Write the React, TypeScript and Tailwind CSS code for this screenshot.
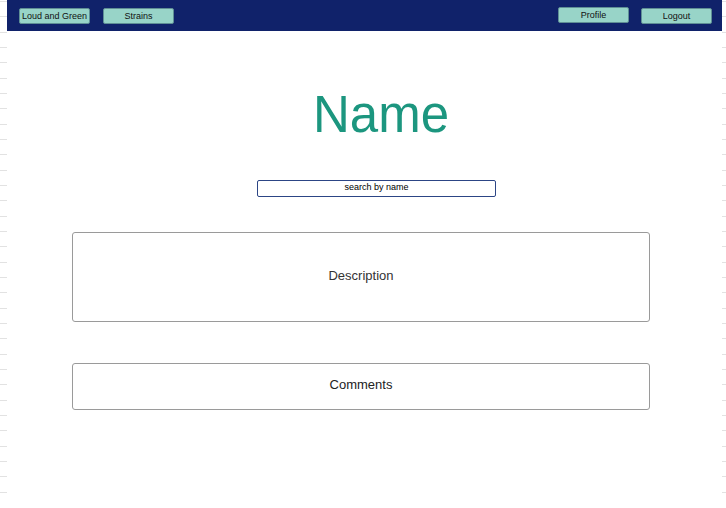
import React from "react";

const ticks = Array.from({ length: 33 }, (_, i) => i);

function Ticks({ w }: { w: string }) {
  return (
    <div className={`flex flex-col pt-[1px] ${w}`}>
      {ticks.map((i) => (
        <div key={i} className="h-[15.33px] shrink-0 border-t border-[#e2e2e2]" />
      ))}
    </div>
  );
}

function NavButton({ label, className = "" }: { label: string; className?: string }) {
  return (
    <button
      className={`h-[16px] w-[71px] rounded-[2px] border border-[#5f8f95] bg-[#98d4c8] text-[9px] leading-none text-[#111] ${className}`}
    >
      {label}
    </button>
  );
}

export default function App() {
  return (
    <div
      className="flex h-[508px] w-[726px] overflow-hidden bg-white"
      style={{ fontFamily: '"Liberation Sans", Arial, sans-serif' }}
    >
      <Ticks w="w-[7px]" />
      <div className="flex w-[715px] flex-col">
        <header className="flex h-[31px] items-start bg-[#10226a] pl-[12px] pr-[10px]">
          <NavButton label="Loud and Green" className="mt-[8px] w-[70px]" />
          <NavButton label="Strains" className="ml-[13px] mt-[8px]" />
          <div className="flex-1" />
          <NavButton label="Profile" className="mt-[7px]" />
          <NavButton label="Logout" className="ml-[12px] mt-[8px]" />
        </header>
        <div className="flex flex-col">
          <h1 className="ml-[304px] mt-[59px] w-[140px] text-center text-[51px] leading-[50px] text-[#1c967f]">
            Name
          </h1>
          <div className="ml-[250px] mt-[40px] flex h-[17px] w-[239px] items-center justify-center rounded-[2px] border border-[#2c4585] pb-[1px] text-[9px] text-black">
            search by name
          </div>
          <div className="ml-[65px] mt-[35px] flex h-[90px] w-[578px] items-center justify-center rounded-[3px] border border-[#9a9a9a] pb-[3px] text-[13px] text-[#333]">
            Description
          </div>
          <div className="ml-[65px] mt-[41px] flex h-[47px] w-[578px] items-center justify-center rounded-[3px] border border-[#9a9a9a] pb-[4px] text-[13px] text-[#222]">
            Comments
          </div>
        </div>
      </div>
      <Ticks w="w-[4px]" />
    </div>
  );
}
